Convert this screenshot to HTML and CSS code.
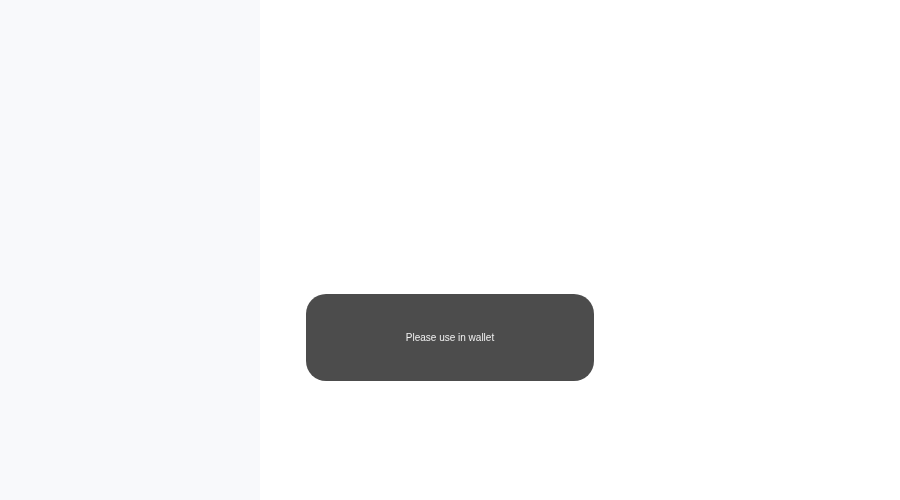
FILE: index.html
```html
<!DOCTYPE html>
<html>
<head>
<meta charset="utf-8">
<link rel="stylesheet" href="styles.css">
</head>
<body>
<div class="app">
  <aside class="sidebar"></aside>
  <main class="content"></main>
</div>
<div class="toast">Please use in wallet</div>
</body>
</html>
```
FILE: styles.css
```css
html, body {
  margin: 0;
  padding: 0;
  height: 100%;
  font-family: "Liberation Sans", Arial, sans-serif;
  background: #ffffff;
}
.app {
  display: flex;
  height: 100%;
}
.sidebar {
  width: 260px;
  flex: 0 0 260px;
  background: #f8f9fb;
}
.content {
  flex: 1;
  background: #ffffff;
}
.toast {
  position: fixed;
  left: 306px;
  top: 294px;
  width: 288px;
  height: 87px;
  box-sizing: border-box;
  border-radius: 20px;
  background: rgba(0, 0, 0, 0.7);
  color: #f0f0f0;
  font-size: 10px;
  display: flex;
  align-items: center;
  justify-content: center;
}
```
